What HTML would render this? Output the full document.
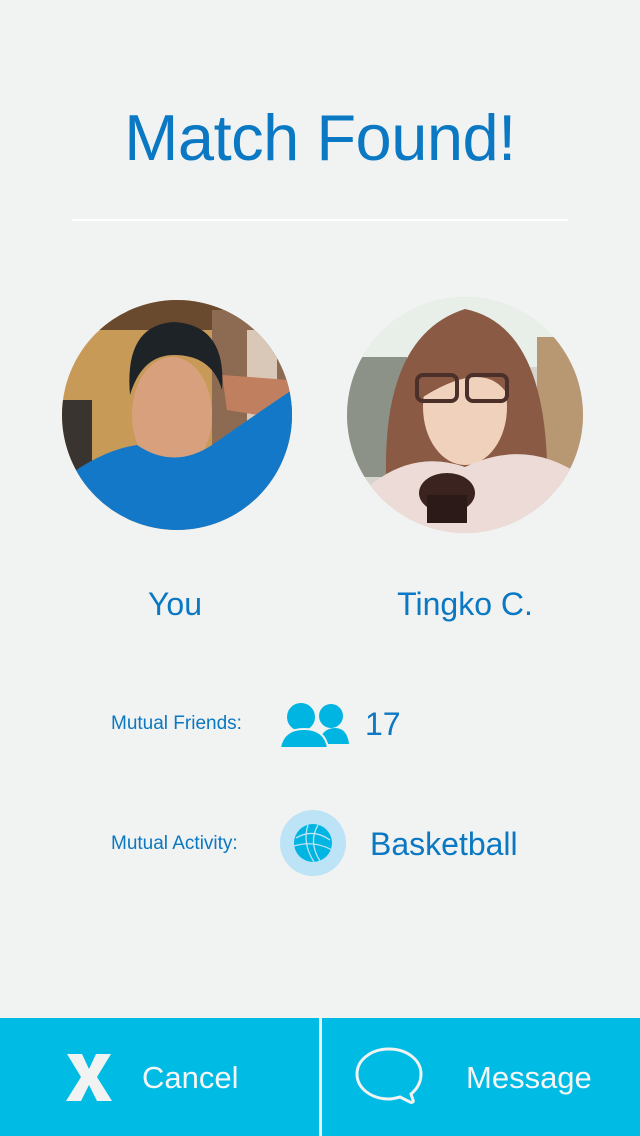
<!DOCTYPE html>
<html><head><meta charset="utf-8"><style>
html,body{margin:0;padding:0}
body{width:640px;height:1136px;background:#f1f2f2;position:relative;overflow:hidden;font-family:"Liberation Sans",sans-serif;color:#0a78c2}
.abs{position:absolute}
h1{position:absolute;top:100px;left:0;width:640px;text-align:center;margin:0;font-weight:normal;font-size:65px;letter-spacing:-0.5px;color:#0a78c2}
.line{left:72px;top:219px;width:496px;height:2px;background:#fff}
.name{font-size:32px;top:586px;text-align:center}
.lbl{font-size:19px;left:111px}
.val{font-size:32px}
.bar{top:1018px;height:118px;background:#00bbe3}
.btn{color:#f4f6f6;font-size:31px;top:1060px}
</style></head><body>
<h1>Match Found!</h1>
<div class="abs line"></div>

<svg class="abs" style="left:62px;top:300px" width="230" height="230" viewBox="0 0 230 230">
<defs><clipPath id="c1"><circle cx="115" cy="115" r="115"/></clipPath></defs>
<g clip-path="url(#c1)">
<rect width="230" height="230" fill="#c89a58"/>
<rect x="0" y="0" width="230" height="30" fill="#6a4a2e"/>
<rect x="150" y="10" width="80" height="140" fill="#8d6a52"/>
<rect x="185" y="30" width="30" height="110" fill="#d9c7b8"/>
<rect x="0" y="100" width="30" height="90" fill="#3a3430"/>
<path d="M160 75 L228 80 L228 120 L165 110 Z" fill="#c08060"/>
<ellipse cx="110" cy="115" rx="40" ry="58" fill="#d9a07e"/>
<path d="M68 95 Q62 25 112 22 Q165 25 160 90 Q150 55 112 55 Q80 55 68 95Z" fill="#1e2328"/>
<path d="M0 230 L0 180 Q40 150 75 145 Q112 170 150 145 Q200 110 230 90 L230 230Z" fill="#1478c8"/>
</g></svg>

<svg class="abs" style="left:347px;top:297px" width="236" height="236" viewBox="0 0 236 236">
<defs><clipPath id="c2"><circle cx="118" cy="118" r="118"/></clipPath></defs>
<g clip-path="url(#c2)">
<rect width="236" height="236" fill="#d6d4cc"/>
<rect x="0" y="0" width="236" height="70" fill="#e8efe9"/>
<rect x="0" y="60" width="60" height="120" fill="#8d9288"/>
<rect x="190" y="40" width="46" height="150" fill="#b89872"/>
<path d="M40 200 Q30 40 118 12 Q205 30 200 200Z" fill="#8a5a44"/>
<ellipse cx="118" cy="110" rx="42" ry="58" fill="#f0d2bc"/>
<path d="M76 100 Q80 30 130 35 Q165 50 162 100 Q140 60 76 100Z" fill="#8a5a44"/>
<rect x="70" y="78" width="40" height="26" rx="6" fill="none" stroke="#4a3028" stroke-width="4"/>
<rect x="120" y="78" width="40" height="26" rx="6" fill="none" stroke="#4a3028" stroke-width="4"/>
<path d="M0 236 L10 200 Q60 150 118 170 Q180 140 236 180 L236 236Z" fill="#ecdbd6"/>
<ellipse cx="100" cy="196" rx="28" ry="20" fill="#3b2420"/>
<rect x="80" y="198" width="40" height="28" fill="#2c1a18"/>
</g></svg>

<div class="abs name" style="left:115px;width:120px">You</div>
<div class="abs name" style="left:385px;width:160px">Tingko C.</div>

<div class="abs lbl" style="top:713px">Mutual Friends:</div>
<svg class="abs" style="left:280px;top:700px" width="70" height="48" viewBox="0 0 70 48">
<circle cx="51" cy="16" r="12" fill="#00b5e2"/>
<path d="M38 44 Q42 28 55 28 Q67 28 69 44Z" fill="#00b5e2"/>
<circle cx="21" cy="17" r="15" fill="#00b5e2" stroke="#f1f2f2" stroke-width="2"/>
<path d="M0 48 Q3 29 24 29 Q45 29 48 48Z" fill="#00b5e2" stroke="#f1f2f2" stroke-width="2"/>
</svg>
<div class="abs val" style="left:365px;top:706px">17</div>

<div class="abs lbl" style="top:833px">Mutual Activity:</div>
<svg class="abs" style="left:280px;top:810px" width="66" height="66" viewBox="0 0 66 66">
<circle cx="33" cy="33" r="33" fill="#bde3f7"/>
<circle cx="33" cy="33" r="19" fill="#00b5e2"/>
<g fill="none" stroke="#bde3f7" stroke-width="1.3">
<path d="M16 28 Q33 18 50 30"/><path d="M14 36 Q34 30 52 40"/>
<path d="M28 15 Q22 33 34 52"/><path d="M38 15 Q28 32 40 51"/>
</g></svg>
<div class="abs val" style="left:370px;top:826px">Basketball</div>

<div class="abs bar" style="left:0;width:319px"></div>
<div class="abs bar" style="left:322px;width:318px"></div>
<div class="abs" style="left:319px;top:1018px;width:3px;height:118px;background:#e6f4f8"></div>
<svg class="abs" style="left:64px;top:1052px" width="50" height="50" viewBox="0 0 50 50">
<path d="M3 2 L18 2 L25 17 L32 2 L47 2 L33 25 L48 49 L33 49 L25 33 L17 49 L2 49 L17 25 Z" fill="#f1f2f2"/>
</svg>
<div class="abs btn" style="left:142px">Cancel</div>
<svg class="abs" style="left:354px;top:1046px" width="70" height="62" viewBox="0 0 70 62">
<path d="M35 3 C17 3 3 14 3 28 C3 42 17 53 35 53 C39 53 42 52 46 51 L56 56 C58 57 60 56 59 54 L57 48 C63 43 67 36 67 28 C67 14 53 3 35 3 Z" fill="none" stroke="#f1f2f2" stroke-width="3"/>
</svg>
<div class="abs btn" style="left:466px">Message</div>
</body></html>
